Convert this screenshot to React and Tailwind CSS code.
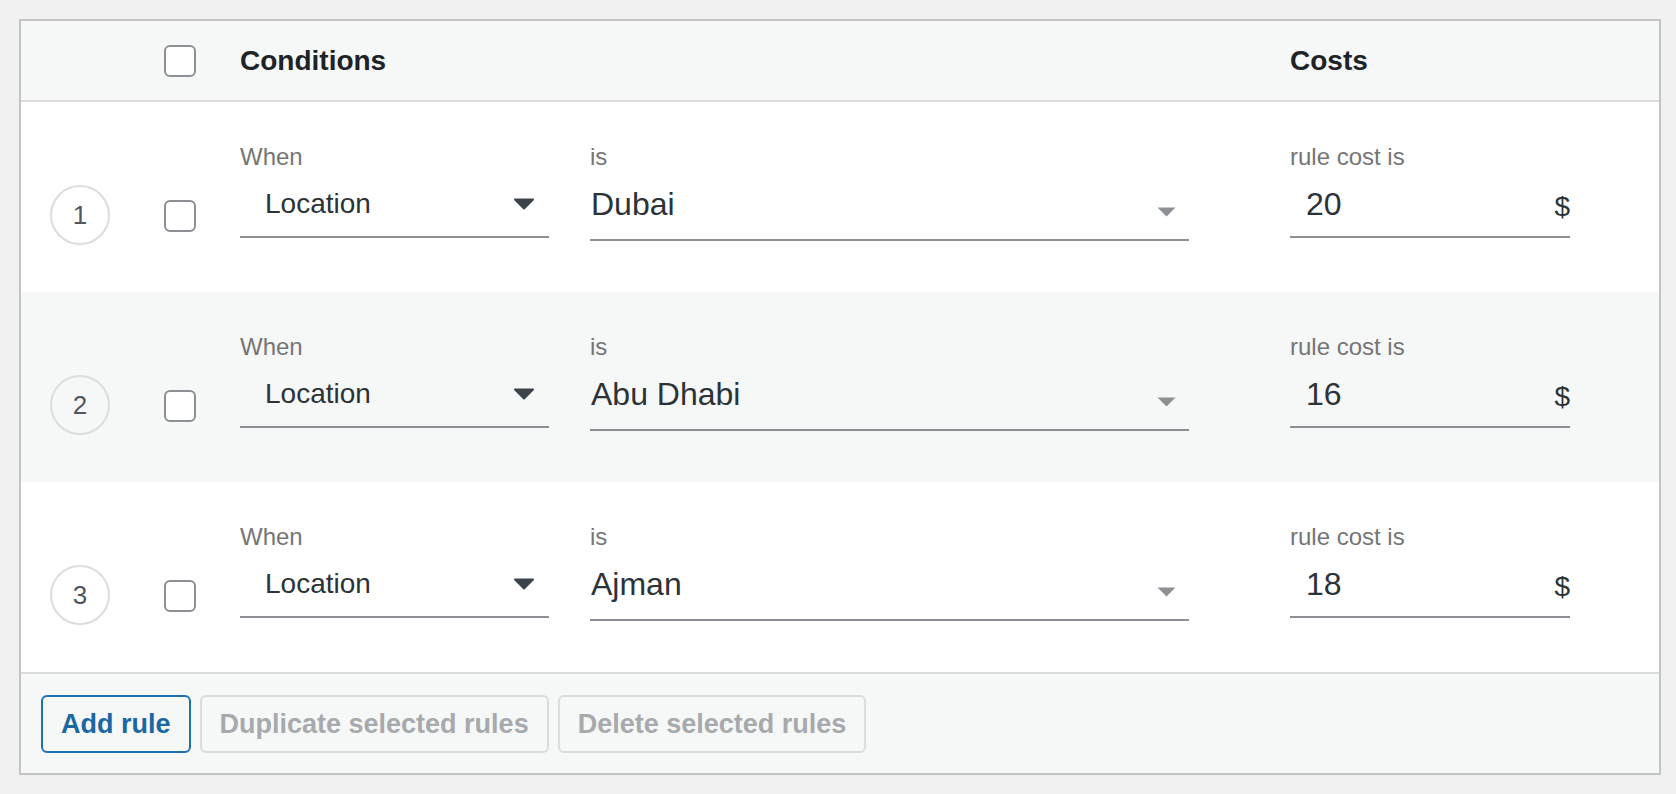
import React from "react";

const rules = [
  { id: 1, value: "Dubai", cost: "20", bg: "bg-white" },
  { id: 2, value: "Abu Dhabi", cost: "16", bg: "bg-[#f6f7f7]" },
  { id: 3, value: "Ajman", cost: "18", bg: "bg-white" },
];

function Checkbox({ className = "" }) {
  return (
    <span
      className={`block w-8 h-8 shrink-0 rounded-[6px] border-2 border-[#8c8f94] bg-white ${className}`}
    />
  );
}

function DarkArrow() {
  return (
    <svg width="22" height="12" viewBox="0 0 22 12" className="shrink-0">
      <path d="M2 1.5 L20 1.5 L11 10.5 Z" fill="#3c434a" stroke="#3c434a" strokeWidth="2" strokeLinejoin="round" />
    </svg>
  );
}

function LightArrow({ className = "" }) {
  return (
    <svg width="19" height="10" viewBox="0 0 19 10" className={`shrink-0 ${className}`}>
      <path d="M0.5 0.5 L18.5 0.5 L9.5 9.5 Z" fill="#8c8f94" />
    </svg>
  );
}

function RuleRow({ rule }) {
  return (
    <div className={`flex items-start h-[190px] ${rule.bg}`}>
      {/* number */}
      <div className="ml-[29px] mt-[83px] w-[60px] h-[60px] shrink-0 rounded-full border-2 border-[#dcdcde] flex items-center justify-center text-[26px] text-[#50575e]">
        {rule.id}
      </div>

      <Checkbox className="ml-[54px] mt-[98px]" />

      {/* conditions */}
      <div className="ml-[44px] mt-[41px] flex">
        <div className="w-[309px]">
          <div className="text-[24px] leading-[28px] text-[#757575]">When</div>
          <div className="mt-[7px] h-[60px] pb-[6px] border-b-2 border-[#8c8f94] flex items-center justify-between pl-[25px] pr-[14px]">
            <span className="text-[28px] leading-[34px] text-[#2c3338]">Location</span>
            <DarkArrow />
          </div>
        </div>
        <div className="ml-[41px] w-[599px]">
          <div className="text-[24px] leading-[28px] text-[#757575]">is</div>
          <div className="mt-[7px] h-[63px] pb-[9px] border-b-2 border-[#8c8f94] flex items-center justify-between pl-[1px] pr-[13px]">
            <span className="text-[32px] leading-[40px] text-[#2c3338]">{rule.value}</span>
            <LightArrow className="mt-[16px]" />
          </div>
        </div>
      </div>

      {/* costs */}
      <div className="ml-[101px] mt-[41px] w-[280px]">
        <div className="text-[24px] leading-[28px] text-[#757575]">rule cost is</div>
        <div className="mt-[7px] h-[60px] pb-[6px] border-b-2 border-[#8c8f94] flex items-center justify-between pl-[16px]">
          <span className="text-[32px] leading-[40px] text-[#2c3338]">{rule.cost}</span>
          <span className="mt-[6px] text-[28px] leading-[34px] text-[#2c3338]">$</span>
        </div>
      </div>
    </div>
  );
}

export default function App() {
  return (
    <div
      className="w-[1676px] h-[794px] bg-[#f0f0f1] pt-[19px] pl-[19px]"
      style={{ fontFamily: '"Liberation Sans", Arial, sans-serif' }}
    >
      <div className="w-[1642px] border-2 border-[#c3c4c7] bg-white">
        {/* header */}
        <div className="h-[81px] flex items-center bg-[#f6f7f7] border-b-2 border-[#dcdcde]">
          <Checkbox className="ml-[143px]" />
          <div className="ml-[44px] w-[1050px] text-[28px] font-bold text-[#1d2327]">Conditions</div>
          <div className="text-[28px] font-bold text-[#1d2327]">Costs</div>
        </div>

        {rules.map((rule) => (
          <RuleRow key={rule.id} rule={rule} />
        ))}

        {/* footer */}
        <div className="h-[101px] border-t-2 border-[#dcdcde] bg-[#f6f7f7] flex items-start gap-[9px] pl-[20px] pt-[21px]">
          <button className="h-[58px] px-[18px] rounded-[6px] border-2 border-[#2271b1] bg-[#f6f7f7] text-[27px] font-bold text-[#1a67a3]">
            Add rule
          </button>
          <button className="h-[58px] px-[18px] rounded-[6px] border-2 border-[#dcdcde] bg-[#f6f7f7] text-[27px] font-bold text-[#a7aaad]">
            Duplicate selected rules
          </button>
          <button className="h-[58px] px-[18px] rounded-[6px] border-2 border-[#dcdcde] bg-[#f6f7f7] text-[27px] font-bold text-[#a7aaad]">
            Delete selected rules
          </button>
        </div>
      </div>
    </div>
  );
}
